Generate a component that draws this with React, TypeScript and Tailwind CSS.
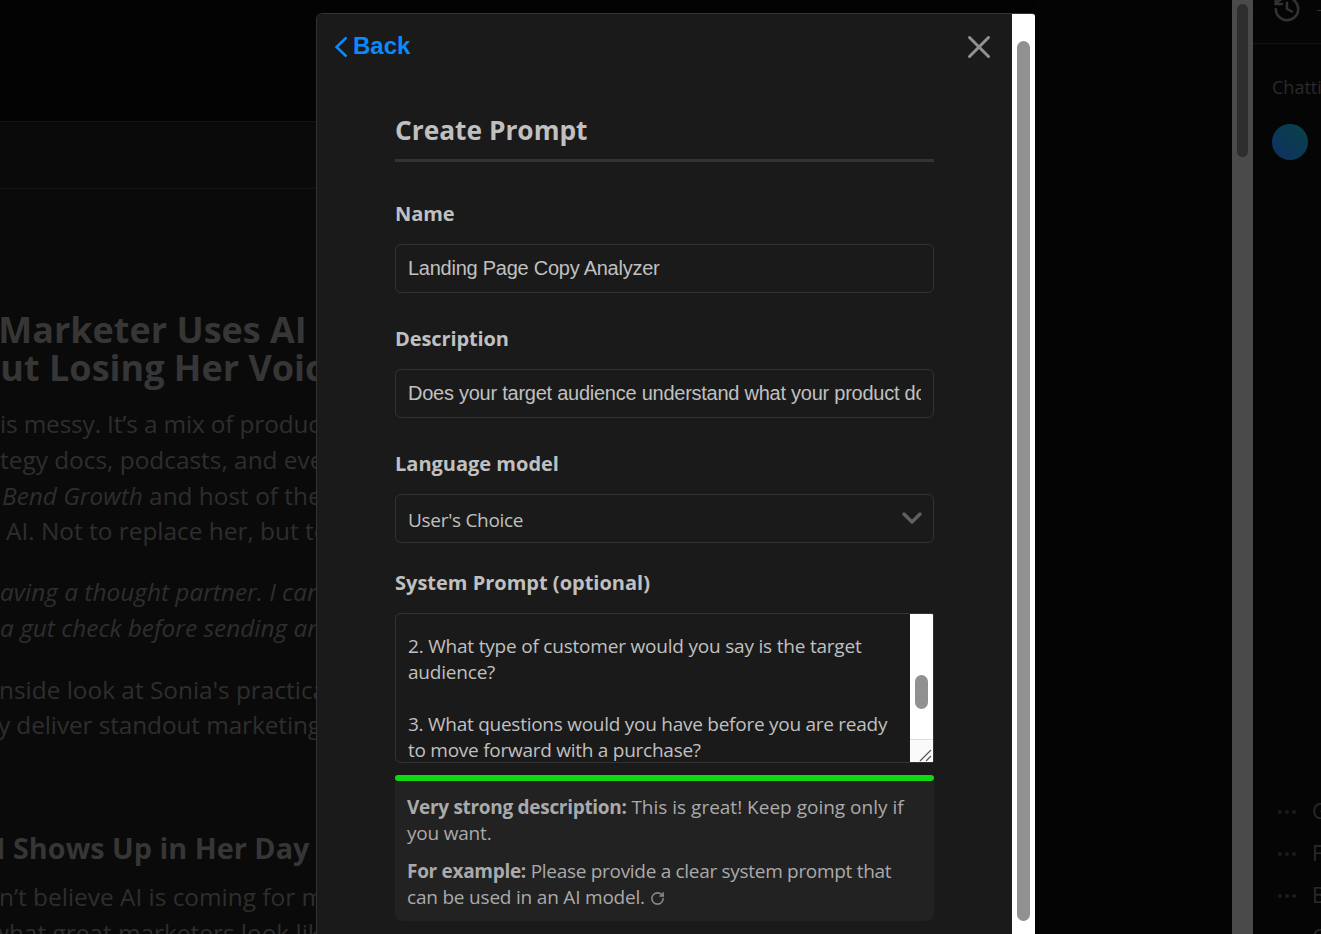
import { ChevronDown, X, RotateCw, History } from 'lucide-react';

const sans = 'font-["Open_Sans","Noto_Sans",sans-serif]';

function Article() {
  return (
    <div className={`h-full w-[1035px] shrink-0 overflow-hidden ${sans}`}>
      <div className="h-[122px] border-b border-[#141414] bg-[#030303]" />
      <div className="h-[67px] border-b border-[#141414] bg-[#0a0a0a]" />
      <div className="h-[745px] overflow-hidden whitespace-nowrap bg-[#0a0a0a] text-[24.4px] leading-[35.75px] text-[#2e2e2e]">
        <div className="pt-[122px] text-[36px] leading-[38px] font-bold text-[#363636]">
          <p className="ml-[-36px]">A Marketer Uses AI</p>
          <p className="ml-[-107px]">Without Losing Her Voice</p>
        </div>
        <div className="mt-[19px]">
          <p className="tracking-[-0.15px]">is messy. It’s a mix of product launches</p>
          <p>tegy docs, podcasts, and events</p>
          <p className="ml-[2px]"><em>Bend Growth</em> and host of the show</p>
          <p className="ml-[6px]">AI. Not to replace her, but to</p>
        </div>
        <div className="mt-[25px] italic">
          <p>aving a thought partner. I can</p>
          <p>a gut check before sending an</p>
        </div>
        <div className="mt-[26px]">
          <p className="ml-[-1px]">nside look at Sonia's practical</p>
          <p className="ml-[-2px] tracking-[-0.1px]">y deliver standout marketing</p>
        </div>
        <p className="mt-[86px] ml-[-4px] text-[28.8px] leading-[38px] font-bold text-[#363636]">I Shows Up in Her Day</p>
        <div className="mt-[12px]">
          <p className="ml-[-1px]">n’t believe AI is coming for my</p>
          <p className="ml-[-10px]">what great marketers look like</p>
        </div>
      </div>
    </div>
  );
}

function Sidebar() {
  const items = ['G', 'F', 'B', 'C'];
  return (
    <div className={`h-full flex-1 overflow-hidden bg-[#050505] ${sans}`}>
      <div className="flex h-[44px] overflow-hidden border-b border-[#141414] pl-[19px]">
        <History className="mt-[-6px] h-[30px] w-[30px] text-[#333]" strokeWidth={2} />
        <div className="mt-[10px] ml-[15px] h-[1px] w-[4px] bg-[#333]" />
      </div>
      <p className="mt-[31px] pl-[19px] text-[18px] leading-[24px] whitespace-nowrap text-[#2a2a2a]">Chatting</p>
      <div className="mt-[25px] ml-[19px] h-9 w-9 rounded-full bg-gradient-to-tr from-[#103060] to-[#0a4048]" />
      <div className="mt-[640px]">
        {items.map((label) => (
          <div key={label} className="mb-[19px] flex h-[23px] items-center pl-[25px] text-[21px] text-[#2a2a2a]">
            <span className="flex gap-[3px]">
              <i className="h-[4px] w-[4px] rounded-full bg-[#1c1c1c]" />
              <i className="h-[4px] w-[4px] rounded-full bg-[#1c1c1c]" />
              <i className="h-[4px] w-[4px] rounded-full bg-[#1c1c1c]" />
            </span>
            <span className="ml-[16px]">{label}</span>
          </div>
        ))}
      </div>
    </div>
  );
}

function Modal() {
  return (
    <div className="absolute top-[13px] left-[316px] flex h-[921px] w-[719px] overflow-hidden rounded-tl-[6px] rounded-tr-[3px] border-t border-l border-[#333]">
      <div className={`w-[695px] bg-[#1a1a1a] text-[#c0c0c0] ${sans}`}>
        <div className="flex h-[66px] items-center justify-between pr-[14px] pl-[17px]">
          <div className="flex items-center gap-[5px] text-[#0a8aff]">
            <svg viewBox="0 0 14 22" className="h-[22px] w-[14px]" fill="none" stroke="currentColor" strokeWidth="2.5">
              <polyline points="12.5,1.5 2.5,11 12.5,20.5" />
            </svg>
            <span className="mt-[-2px] font-['Liberation_Sans',sans-serif] text-[24px] font-bold">Back</span>
          </div>
          <X className="h-[38px] w-[38px] text-[#919191]" strokeWidth={1.9} />
        </div>
        <div className="mx-[78px] w-[539px]">
          <h1 className="mt-[32px] h-[50px] border-b-[3px] border-[#333] text-[26.3px] leading-[36px] font-bold">Create Prompt</h1>
          <label className="mt-[39px] block text-[20px] leading-[26px] font-bold tracking-[-0.1px]">Name</label>
          <input readOnly value="Landing Page Copy Analyzer" className="mt-[17px] block h-[49px] w-full rounded-[6px] border border-[#333] px-3 font-['Liberation_Sans',sans-serif] text-[20px] tracking-[-0.25px] outline-none" />
          <label className="mt-[33px] block text-[20px] leading-[26px] font-bold tracking-[-0.1px]">Description</label>
          <input readOnly value="Does your target audience understand what your product does?" className="mt-[17px] block h-[49px] w-full rounded-[6px] border border-[#333] px-3 font-['Liberation_Sans',sans-serif] text-[20px] tracking-[-0.25px] outline-none" />
          <label className="mt-[33px] block text-[20px] leading-[26px] font-bold">Language model</label>
          <div className="mt-[17px] flex h-[49px] items-center justify-between rounded-[6px] border border-[#333] pr-[5px] pl-3 text-[19px] tracking-[-0.3px]">
            <span className="pt-[4px]">User's Choice</span>
            <ChevronDown className="mb-[2px] h-[32px] w-[32px] text-[#606060]" strokeWidth={2.5} />
          </div>
          <label className="mt-[27px] block text-[20px] leading-[26px] font-bold">System Prompt (optional)</label>
          <div className="relative mt-[17px] flex h-[150px] overflow-hidden rounded-l-[6px] rounded-r-[2px] border border-[#333] text-[19px] leading-[26px] tracking-[-0.2px]">
            <div className="flex-1 pt-[19px] pl-3">
              <p>2. What type of customer would you say is the target<br />audience?</p>
              <p className="mt-[26px] tracking-[-0.26px]">3. What questions would you have before you are ready<br />to move forward with a purchase?</p>
            </div>
            <div className="flex w-[23px] flex-col bg-white">
              <div className="mx-[5px] mt-[61px] h-[34px] rounded-full bg-[#919191]" />
              <div className="mt-auto flex h-[23px] items-end justify-end border-t border-[#ddd] bg-[#fafafa]">
                <svg viewBox="0 0 14 14" className="h-[14px] w-[14px]" fill="none" stroke="#555" strokeWidth="1.2">
                  <path d="M1 13 L12 2 M7 13 L12 8" />
                </svg>
              </div>
            </div>
          </div>
          <div className="mt-[12px] h-[6px] rounded-full bg-[#10d910]" />
          <div className="h-[140px] rounded-b-[8px] bg-[#222] px-3 pt-[13px] text-[19px] leading-[26px] tracking-[-0.2px] text-[#aaa]">
            <p><b className="tracking-[-0.3px]">Very strong description:</b> <span className="tracking-[0px]">This is great! Keep going only if</span> you want.</p>
            <p className="mt-[12px]">
              <b className="tracking-[-0.3px]">For example:</b> <span className="tracking-[-0.3px]">Please provide a clear system prompt that</span> can be used in an AI model.{' '}
              <RotateCw className="inline h-[15px] w-[15px] text-[#888]" strokeWidth={2.5} />
            </p>
          </div>
        </div>
      </div>
      <div className="w-[23px] bg-white pt-[27px]">
        <div className="mx-[5px] h-[880px] rounded-full bg-[#919191]" />
      </div>
    </div>
  );
}

export default function App() {
  return (
    <div className="relative flex h-[934px] w-[1321px] overflow-hidden bg-[#040404]">
      <Article />
      <div className="w-[197px] shrink-0" />
      <div className="h-full w-[21px] shrink-0 bg-[#4a4a4a] px-[5px] pt-[4px]">
        <div className="h-[153px] rounded-full bg-[#2e2e2e]" />
      </div>
      <Sidebar />
      <Modal />
    </div>
  );
}
